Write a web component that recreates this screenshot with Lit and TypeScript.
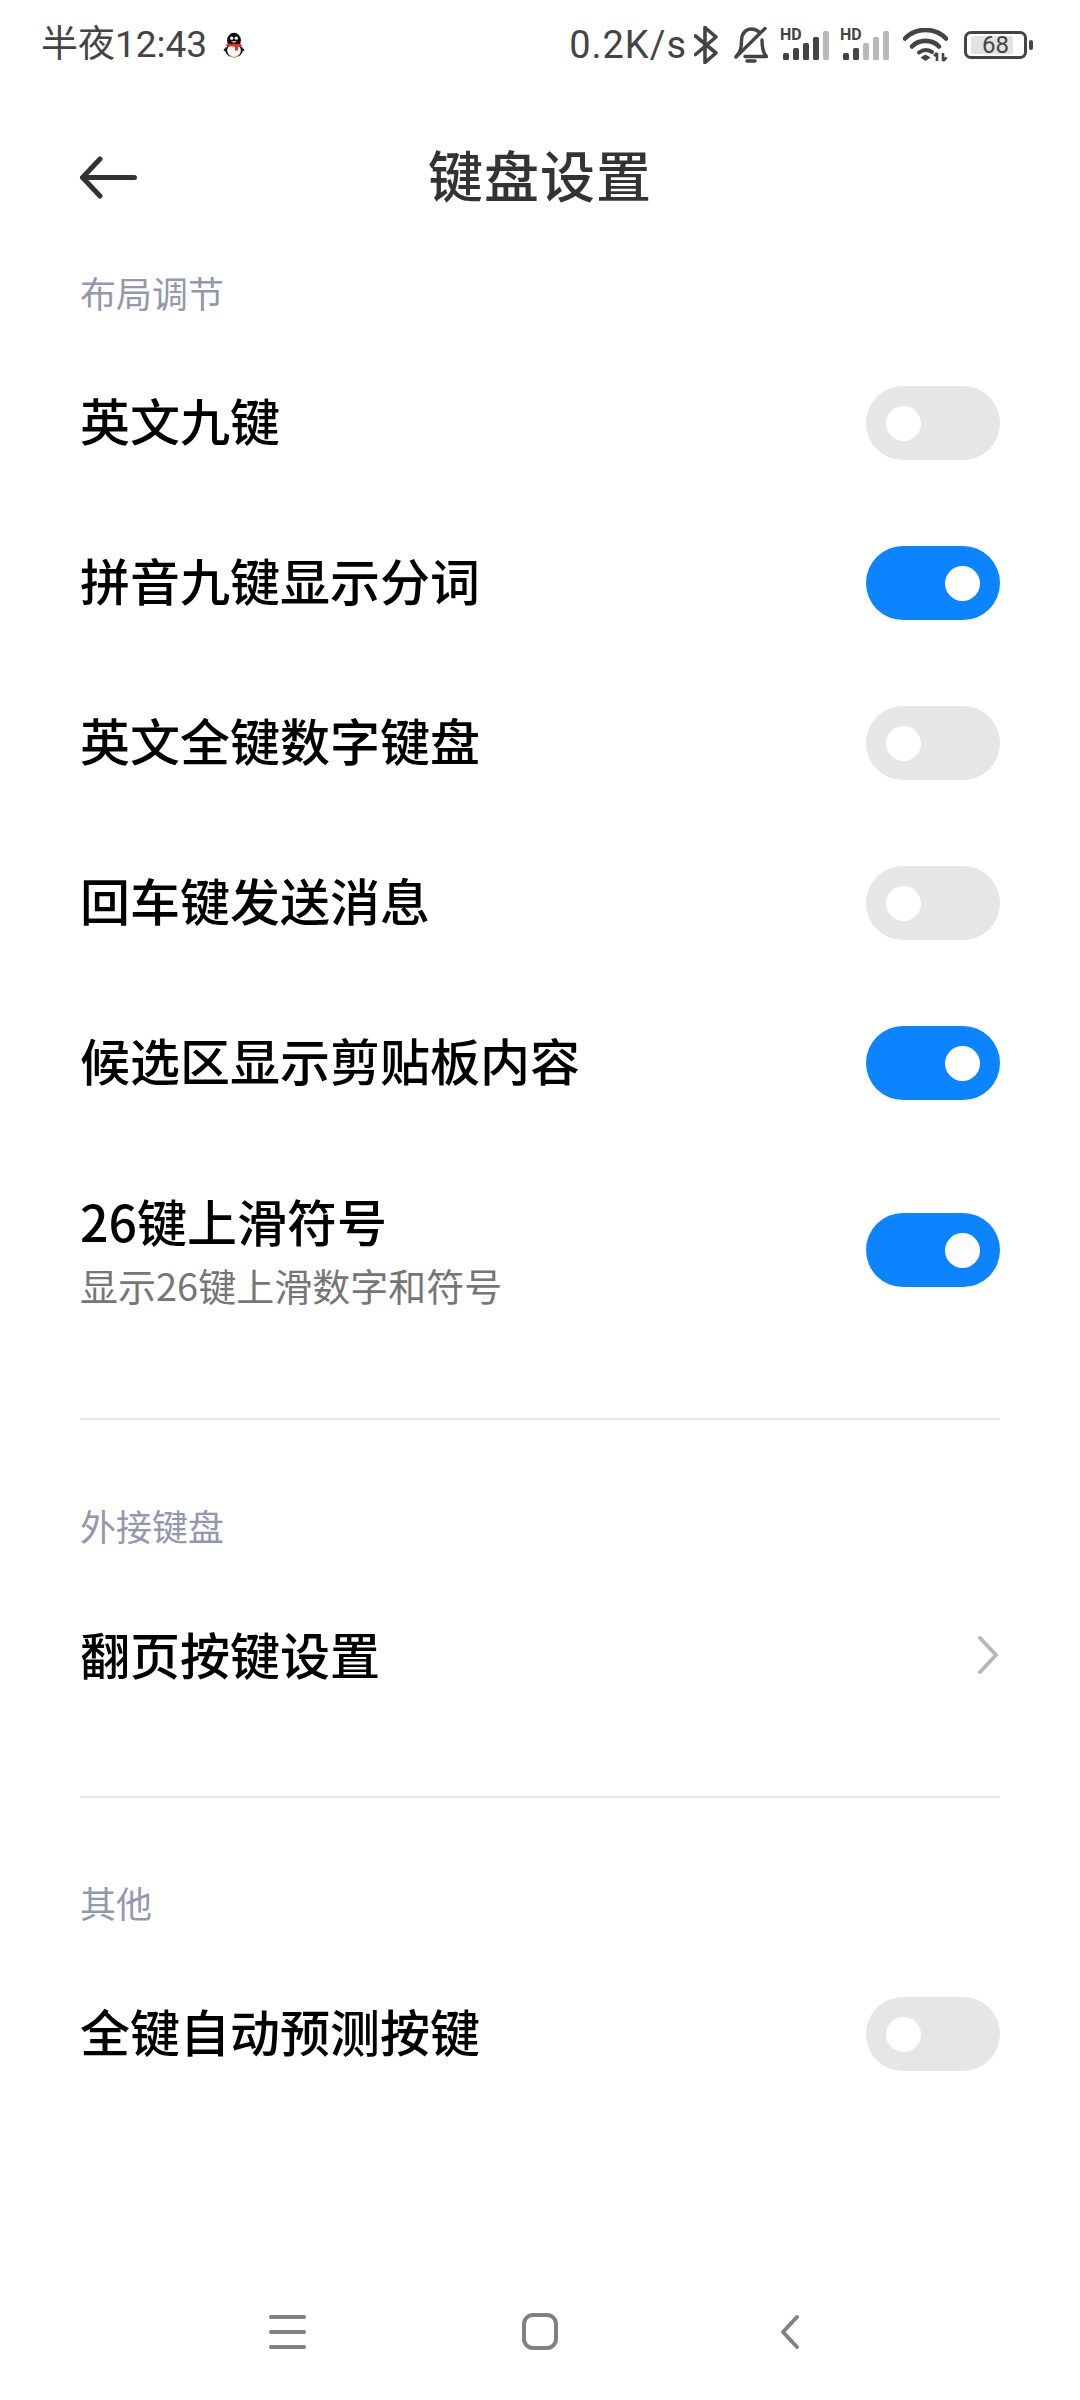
import { LitElement, html, css, svg } from "lit";
import { customElement } from "lit/decorators.js";

const signal = (on: number, gap: number) => {
  const xs = [3, 13, 23, 33, 43];
  const tops = [25, 20, 15, 9, 3];
  return svg`<svg style="margin-left:${gap}px" width="50" height="44" viewBox="0 -5 50 44">
    <text x="0" y="12" class="hd">HD</text>
    ${xs.map((x, i) => svg`<rect x="${x}" y="${tops[i]}" width="6" height="${32 - tops[i]}" rx="1.6" fill="${i < on ? "#444" : "#b9b9b9"}"/>`)}
  </svg>`;
};

@customElement("app-root")
export class AppRoot extends LitElement {
  static styles = css`
    :host { display: block; width: 1080px; height: 2400px; background: #fff; font-family: "Noto Sans CJK SC", "Noto Sans", sans-serif; color: #000; overflow: hidden; }
    .page { display: flex; flex-direction: column; height: 2400px; }
    .status { height: 90px; display: flex; align-items: center; padding: 0 47px 0 41px; color: #444; box-sizing: border-box; }
    .clock { font-size: 37px; line-height: 90px; font-family: "Roboto", "Noto Sans CJK SC", sans-serif; }
    .qq { margin-left: 16px; }
    .spacer { flex: 1; }
    .speed { font-family: "Roboto", sans-serif; font-size: 38px; letter-spacing: 1px; }
    .status svg { display: block; flex: none; }
    .bt { margin-left: 7px; }
    .bell { margin-left: 16px; }
    .hd { font: 700 16px "Roboto", sans-serif; fill: #444; }
    .wifi { margin-left: 13px; }
    .batt { margin-left: 16px; }
    .header { height: 172px; display: flex; align-items: center; justify-content: center; position: relative; }
    .back { position: absolute; left: 78px; top: 65px; }
    .title { font-size: 55px; font-weight: 500; color: #333; letter-spacing: 1px; padding-bottom: 6px; }
    .section { padding: 0 80px; }
    .label { height: 64px; line-height: 60px; font-size: 36px; color: #9398ad; margin-bottom: 16px; }
    .row { height: 160px; display: flex; align-items: center; justify-content: space-between; }
    .row > .name { padding-bottom: 8px; }
    .row.tall { height: 214px; }
    .text { padding-bottom: 3px; }
    .name { font-size: 50px; font-weight: 500; line-height: 62px; color: #000; }
    .sub { font-size: 38px; line-height: 46px; color: #767676; margin-top: 11px; }
    .toggle { width: 134px; height: 74px; border-radius: 37px; background: #e6e6e6; display: flex; align-items: center; padding: 0 20px; box-sizing: border-box; flex: none; }
    .toggle.on { background: #0d84ff; justify-content: flex-end; }
    .knob { width: 35px; height: 35px; border-radius: 50%; background: #fff; }
    .chev { margin-right: 1px; }
    .rule { height: 2px; background: #e5e5e5; margin: 0 80px; }
    .s1 .label { margin-bottom: 17px; }
    .s1 { padding-bottom: 61px; }
    .s2 { padding-top: 75px; padding-bottom: 61px; }
    .s2 .row > .name { padding-bottom: 5px; }
    .s3 { padding-top: 73px; }
    .s3 .label { line-height: 63px; margin-bottom: 19px; }
    .nav { margin-top: auto; height: 88px; padding-left: 267px; }
    .nav svg { display: block; }
  `;

  private toggle(on: boolean) {
    return html`<div class="toggle ${on ? "on" : ""}"><div class="knob"></div></div>`;
  }

  private row(name: string, on: boolean) {
    return html`<div class="row"><div class="name">${name}</div>${this.toggle(on)}</div>`;
  }

  render() {
    return html`<div class="page">
      <div class="status">
        <span class="clock">半夜12:43</span>
        <svg class="qq" width="22" height="26" viewBox="0 0 24 28">
          <ellipse cx="12" cy="9" rx="7.5" ry="8.5" fill="#0a0a0a"/>
          <ellipse cx="12" cy="20" rx="9.5" ry="7.5" fill="#0a0a0a"/>
          <ellipse cx="12" cy="20" rx="7.5" ry="7" fill="#fff"/>
          <path d="M4.500 12.500 L19.500 12.500 L21 15 L16.500 16 L16.500 20 L13 20 L13 16 L3 15 Z" fill="#d9322e"/>
          <path d="M8.500 9.500 L15.500 9.500 L12 12 Z" fill="#f0a020"/>
          <circle cx="9.500" cy="6.500" r="1.8" fill="#fff"/><circle cx="14.500" cy="6.500" r="1.8" fill="#fff"/>
          <path d="M6 27 L10 27 L8 25 Z M14 27 L18 27 L16 25 Z" fill="#f0a020"/>
          <path d="M3 16 L0.500 20 L3 21 Z M21 16 L23.500 20 L21 21 Z" fill="#0a0a0a"/>
        </svg>
        <span class="spacer"></span>
        <span class="speed">0.2K/s</span>
        <svg class="bt" width="24" height="38" viewBox="0 0 24 38" fill="none" stroke="#444" stroke-width="3.6" stroke-linecap="round" stroke-linejoin="round"><path d="M1.500 10 L22 27 L11 36.500 V1.500 L22 11 L1.500 28.500"/></svg>
        <svg class="bell" width="34" height="36" viewBox="0 0 34 36" fill="none" stroke="#444" stroke-width="3.4" stroke-linecap="round" stroke-linejoin="round"><path d="M2.500 29 C6 26 7.500 21 7.500 14 C7.500 6 12 2 17.500 2 C20 2 23 3 25 5"/><path d="M28 13 C28 20 29 26 32.500 29.500 H11"/><path d="M31 1.500 L2 30"/><path d="M13 34 H21"/></svg>
        ${signal(4, 12)}
        ${signal(2, 10)}
        <svg class="wifi" width="45" height="34" viewBox="0 0 45 34" fill="none" stroke="#444" stroke-linecap="round"><path stroke-width="4.6" d="M2 10.500 C13 -1 32 -1 43 10.500"/><path stroke-width="4.6" d="M9 18.500 C16 11 29 11 36 18.500"/><path stroke-width="4" d="M16 24.500 C20 21.500 25 21.500 29 24"/><path d="M17.500 29.500 L22.500 26.500 L27.500 29.500 L22.500 33 Z" fill="#444" stroke="none"/><path stroke-width="2.6" stroke-linecap="butt" d="M34 33 V25 M31 28 L34 25 M40 25 V33 M40 33 L43.500 29.500"/></svg>
        <svg class="batt" width="69" height="30" viewBox="0 0 69 30"><rect x="7" y="6" width="42" height="18" rx="2.500" fill="#e2e2e2"/><rect x="1.500" y="2.500" width="60" height="25" rx="5.500" fill="none" stroke="#444" stroke-width="3"/><rect x="65" y="10" width="4" height="10" rx="2" fill="#444"/><text x="31.500" y="23" text-anchor="middle" font-family="Roboto, sans-serif" font-size="24" fill="#444">68</text></svg>
      </div>
      <div class="header">
        <svg class="back" width="62" height="44" viewBox="0 0 62 44" fill="none" stroke="#333" stroke-width="5" stroke-linecap="round" stroke-linejoin="round"><path d="M22 4 L4.500 22.500 L22 41 M4.500 22.500 H56.500"/></svg>
        <div class="title">键盘设置</div>
      </div>
      <div class="section s1">
        <div class="label">布局调节</div>
        ${this.row("英文九键", false)}
        ${this.row("拼音九键显示分词", true)}
        ${this.row("英文全键数字键盘", false)}
        ${this.row("回车键发送消息", false)}
        ${this.row("候选区显示剪贴板内容", true)}
        <div class="row tall">
          <div class="text"><div class="name">26键上滑符号</div><div class="sub">显示26键上滑数字和符号</div></div>
          ${this.toggle(true)}
        </div>
      </div>
      <div class="rule"></div>
      <div class="section s2">
        <div class="label">外接键盘</div>
        <div class="row"><div class="name">翻页按键设置</div>
          <svg class="chev" width="22" height="40" viewBox="0 0 22 40" fill="none" stroke="#b7b7b7" stroke-width="4" stroke-linecap="round" stroke-linejoin="round"><path d="M3 3 L19 20 L3 37"/></svg>
        </div>
      </div>
      <div class="rule"></div>
      <div class="section s3">
        <div class="label">其他</div>
        ${this.row("全键自动预测按键", false)}
      </div>
      <div class="nav">
        <svg width="540" height="40" viewBox="0 0 540 40" fill="none" stroke="#808080" stroke-linecap="round" stroke-linejoin="round">
          <path stroke-width="4" d="M4 5 H37 M4 20 H37 M4 35 H37"/>
          <rect x="257" y="3" width="32" height="33" rx="9" stroke-width="4"/>
          <path stroke-width="4" d="M530 5 L516 20 L530 35"/>
        </svg>
      </div>
    </div>`;
  }
}
